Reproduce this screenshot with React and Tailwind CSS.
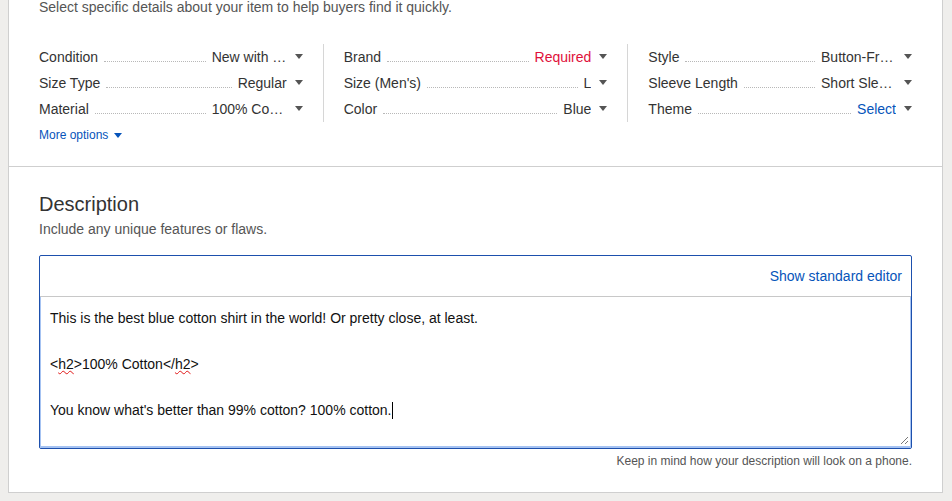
import React from "react";

const FONT = { fontFamily: '"Liberation Sans", Arial, sans-serif' };

function Caret() {
  return (
    <svg width="8" height="5" viewBox="0 0 8 5" className="block">
      <path d="M0 0 L8 0 L4 5 Z" fill="#555" />
    </svg>
  );
}

function Row({ label, value, tone = "normal" }) {
  const color =
    tone === "red" ? "text-[#e0103a]" : tone === "blue" ? "text-[#0654ba]" : "text-[#333]";
  return (
    <div className="flex h-[26px] items-start leading-[26px] text-[14px]">
      <span className="shrink-0 text-[#333]">{label}</span>
      <div className="mx-[6px] h-[18px] flex-1 border-b border-dotted border-[#b8b8b8]" />
      <span className={`max-w-[75px] shrink-0 truncate ${color}`}>{value}</span>
      <div className="ml-[8px] mt-[10px] shrink-0">
        <Caret />
      </div>
    </div>
  );
}

function Column({ rows }) {
  return (
    <div className="flex-1 min-w-0">
      {rows.map((r) => (
        <Row key={r.label} {...r} />
      ))}
    </div>
  );
}

export default function App() {
  const col1 = [
    { label: "Condition", value: "New with tags" },
    { label: "Size Type", value: "Regular" },
    { label: "Material", value: "100% Cotton" },
  ];
  const col2 = [
    { label: "Brand", value: "Required", tone: "red" },
    { label: "Size (Men's)", value: "L" },
    { label: "Color", value: "Blue" },
  ];
  const col3 = [
    { label: "Style", value: "Button-Front" },
    { label: "Sleeve Length", value: "Short Sleeve" },
    { label: "Theme", value: "Select", tone: "blue" },
  ];

  return (
    <div className="h-[501px] w-[952px] overflow-hidden bg-[#efeeec]" style={FONT}>
      <div className="ml-[8px] h-[494px] w-[935px] border-x border-b border-[#cfcfcf] bg-white">
        {/* Item specifics */}
        <div className="h-[168px] border-b border-[#cfcfcf] px-[30px]">
          <div className="-mt-px text-[14px] leading-4 text-[#555]">
            Select specific details about your item to help buyers find it quickly.
          </div>
          <div className="mt-[29px] flex gap-[20px]">
            <Column rows={col1} />
            <div className="w-px self-stretch bg-[#d6d6d6]" />
            <Column rows={col2} />
            <div className="w-px self-stretch bg-[#d6d6d6]" />
            <Column rows={col3} />
          </div>
          <div className="mt-[5px] flex items-center gap-[6px] text-[12px] leading-4 text-[#0654ba]">
            <span>More options</span>
            <svg width="8" height="5" viewBox="0 0 8 5" className="block">
              <path d="M0 0 L8 0 L4 5 Z" fill="#0654ba" />
            </svg>
          </div>
        </div>

        {/* Description */}
        <div className="px-[30px] pt-[25px]">
          <div className="text-[20px] leading-[24px] text-[#333]">Description</div>
          <div className="mt-[5px] text-[14px] leading-4 text-[#555]">
            Include any unique features or flaws.
          </div>

          <div className="mt-[18px] h-[194px] rounded-[2px] border border-[#1d50ad]">
            <div className="flex h-[41px] items-center justify-end border-b border-[#c8c8c8] pr-[9px] text-[14px] leading-4 text-[#0654ba]">
              Show standard editor
            </div>
            <div className="relative h-[151px] border border-b-2 border-t-0 border-[#a6c3f2] pl-[9px] pt-[10px] text-[14px] leading-[23px] text-[#111]">
              <div>This is the best blue cotton shirt in the world! Or pretty close, at least.</div>
              <div>&nbsp;</div>
              <div>
                &lt;
                <span className="underline decoration-wavy decoration-[#e01818] decoration-1 underline-offset-[1px]">h2</span>
                &gt;100% Cotton&lt;/
                <span className="underline decoration-wavy decoration-[#e01818] decoration-1 underline-offset-[1px]">h2</span>
                &gt;
              </div>
              <div>&nbsp;</div>
              <div className="flex items-center">
                <span>You know what's better than 99% cotton? 100% cotton.</span>
                <span className="inline-block h-[17px] w-px bg-black" />
              </div>
              <svg
                width="10"
                height="10"
                viewBox="0 0 10 10"
                className="absolute bottom-[1px] right-[1px]"
              >
                <path d="M9 2 L2 9 M9 6 L6 9" stroke="#777" strokeWidth="1" />
              </svg>
            </div>
          </div>

          <div className="mt-[4px] text-right text-[12px] leading-4 text-[#555]">
            Keep in mind how your description will look on a phone.
          </div>
        </div>
      </div>
    </div>
  );
}
